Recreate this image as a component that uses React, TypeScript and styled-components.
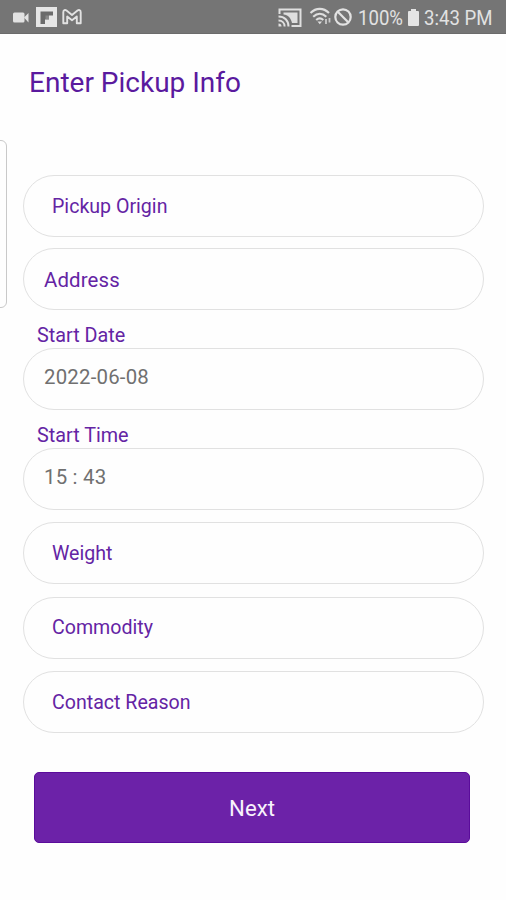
import React from "react";
import styled, { createGlobalStyle } from "styled-components";

const GlobalStyle = createGlobalStyle`
  * { box-sizing: border-box; }
  body { margin: 0; background: #fefefe; font-family: Roboto, sans-serif; }
`;

const Screen = styled.div`
  position: relative;
  width: 506px;
  height: 900px;
  overflow: hidden;
  background: #fefefe;
`;

const StatusBar = styled.header`
  display: flex;
  justify-content: space-between;
  height: 34px;
  background: #757575;
  border-bottom: 1px solid #6b6b6b;
  color: #e2e2e2;
`;

const StatusIcons = styled.svg`
  display: block;
  flex: none;
  height: 33px;
`;

const StatusGroup = styled.div`
  display: flex;
`;

const StatusText = styled.span<{ $width: number }>`
  width: ${(p) => p.$width}px;
  font-size: 20px;
  line-height: 37px;
  white-space: nowrap;
  transform: scaleX(0.93);
  transform-origin: left;
`;

const EdgeHandle = styled.div`
  position: absolute;
  left: -11px;
  top: 140px;
  width: 18px;
  height: 168px;
  border: 1px solid #c9c9c9;
  border-radius: 6px;
`;

const Title = styled.h1`
  margin: 0;
  padding: 32px 0 0 29px;
  height: 141px;
  font-size: 28px;
  line-height: 34px;
  font-weight: 400;
  color: #5a1a9e;
`;

const Form = styled.form`
  display: flex;
  flex-direction: column;
  padding: 0 22px 0 23px;
`;

const Field = styled.div`
  display: flex;
  align-items: center;
  height: 62px;
  margin-bottom: 12.6px;
  padding: 0 28px;
  border: 1px solid #e1e1e1;
  border-radius: 31px;
  font-size: 19.6px;
  color: #6424a4;
`;

const AddressField = styled(Field)`
  height: 61.4px;
  margin: -1.2px 0 0;
  padding: 1px 20px 0;
  font-size: 20.4px;
  letter-spacing: 0.15px;
`;

const ValueField = styled(Field)<{ $last?: boolean }>`
  margin-bottom: ${(p) => (p.$last ? 12.6 : 0)}px;
  padding: 0 20px 4px;
  font-size: 20.4px;
  letter-spacing: 0.2px;
  color: #707070;
`;

const Label = styled.label`
  height: 37.9px;
  padding: 14px 0 0 14px;
  font-size: 19.8px;
  line-height: 24px;
  color: #6424a4;
`;

const NextButton = styled.button`
  width: 436px;
  height: 71px;
  margin: 25.7px 0 0 11px;
  padding: 2px 0 0;
  border: 1px solid #5b0c9b;
  border-radius: 5px;
  background: #6c22a8;
  color: #f8f2fc;
  font: 400 22.2px Roboto, sans-serif;
`;

export default function App() {
  return (
    <>
      <GlobalStyle />
      <Screen>
        <StatusBar>
          <StatusIcons width="90" viewBox="0 0 90 33" fill="none">
            <rect x="13" y="12.5" width="11.5" height="10" rx="1.5" fill="#e2e2e2" />
            <path d="M24 17.5L28.5 13V22.5Z" fill="#e2e2e2" />
            <path d="M36 7H57V27H36Z" fill="#e6e6e6" />
            <path d="M40.5 11.5H53V15.5H49V19.5H45V24H40.5Z" fill="#6b6b6b" />
            <path d="M45.5 15.5H49V19H45.5Z" fill="#898989" />
            <path
              d="M63.3 23.3V12.2C63.3 9.8 65.2 9.6 66.5 10.6L72 15L77.5 10.6C78.8 9.6 80.7 9.8 80.7 12.2V23.3H76.8V16.5L72 20.2L67.2 16.5V23.3Z"
              stroke="#e2e2e2"
              strokeWidth="1.9"
              strokeLinejoin="round"
            />
          </StatusIcons>
          <StatusGroup>
            <StatusIcons width="81" viewBox="277 0 81 33" fill="none">
              <path d="M279.5 14V9.5H300.5V26H291.5" stroke="#e0e0e0" strokeWidth="2" />
              <path d="M283.5 12.500H297.500V23H292C291 18 288 15 283.500 14.500Z" fill="#dedede" />
              <path
                d="M278.500 16.500C284.500 16.500 288.500 20.500 288.500 26.500M278.500 20.500C282 20.500 284.600 23 284.600 26.500"
                stroke="#e0e0e0"
                strokeWidth="2"
              />
              <path d="M278.500 23.500Q281.500 23.500 281.500 26.500H278.500Z" fill="#e0e0e0" />
              <path
                d="M310.500 13C316 7.500 323.500 7.500 329 13M313.200 16.800C317.300 12.800 322.200 12.800 326.300 16.800M316.200 20C318.700 17.700 320.800 17.700 323.300 20"
                stroke="#dedede"
                strokeWidth="2.1"
              />
              <path d="M317.500 21.500H322L319.800 24.300Z" fill="#dedede" />
              <path d="M326 19V24M329.500 18V22.500" stroke="#c9c9c9" strokeWidth="1.8" />
              <circle cx="343" cy="17" r="7.7" stroke="#e2e2e2" strokeWidth="2.2" />
              <path d="M337.800 11.800L348.200 22.200" stroke="#e2e2e2" strokeWidth="2.2" />
            </StatusIcons>
            <StatusText $width={49}>100%</StatusText>
            <StatusIcons width="17" viewBox="407 0 17 33">
              <path d="M411 9H416V11H418Q419 11 419 12V25Q419 26 418 26H409Q408 26 408 25V12Q408 11 409 11H411Z" fill="#e4e4e4" />
            </StatusIcons>
            <StatusText $width={82}>3:43 PM</StatusText>
          </StatusGroup>
        </StatusBar>
        <EdgeHandle />
        <Title>Enter Pickup Info</Title>
        <Form>
          <Field>Pickup Origin</Field>
          <AddressField>Address</AddressField>
          <Label>Start Date</Label>
          <ValueField>2022-06-08</ValueField>
          <Label>Start Time</Label>
          <ValueField $last>15 : 43</ValueField>
          <Field>Weight</Field>
          <Field>Commodity</Field>
          <Field>Contact Reason</Field>
          <NextButton type="button">Next</NextButton>
        </Form>
      </Screen>
    </>
  );
}
